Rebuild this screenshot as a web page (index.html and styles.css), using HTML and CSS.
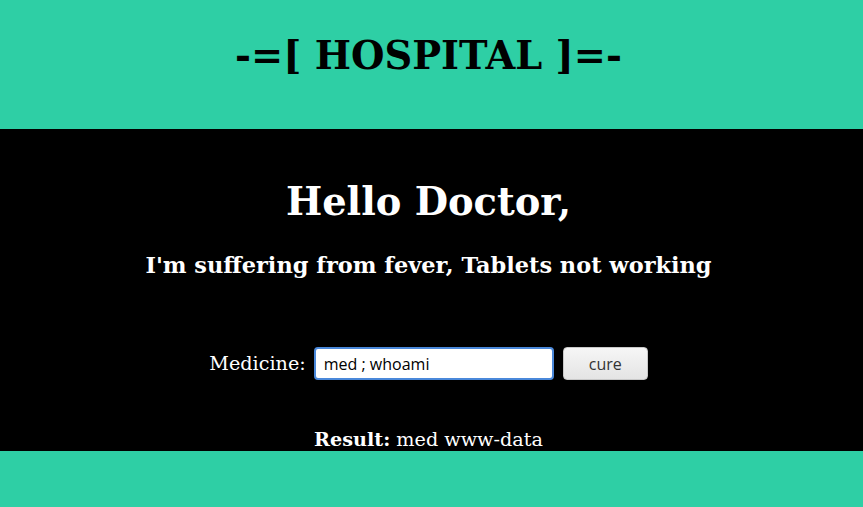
FILE: index.html
```html
<!DOCTYPE html>
<html>
<head>
<meta charset="utf-8">
<title>Hospital</title>
<link rel="stylesheet" href="styles.css">
</head>
<body>
<header class="top">
  <h1 class="brand">-=[ HOSPITAL ]=-</h1>
</header>
<main class="main">
  <h1 class="greet">Hello Doctor,</h1>
  <h3 class="complaint">I'm suffering from fever, Tablets not working</h3>
  <form class="form">
    <label class="label" for="med">Medicine:</label>
    <input class="field" id="med" type="text" value="med ; whoami">
    <button class="btn" type="button">cure</button>
  </form>
  <p class="result"><b>Result:</b> med www-data</p>
</main>
<footer class="bottom"></footer>
</body>
</html>
```
FILE: styles.css
```css
html, body {
  margin: 0;
  padding: 0;
  background: #2ecfa5;
}
body {
  font-family: "DejaVu Serif", serif;
  font-size: 19.2px;
  height: 507px;
  overflow: hidden;
}
.top {
  height: 129px;
  background: #2ecfa5;
  display: flex;
  align-items: center;
  justify-content: center;
  padding-right: 6px;
}
.brand {
  margin: 0 0 18px 0;
  font-size: 38.4px;
  font-weight: bold;
  color: #000;
}
.main {
  background: #000;
  color: #fff;
  height: 322px;
  text-align: center;
  display: flex;
  flex-direction: column;
  align-items: center;
  overflow: hidden;
  padding-right: 6px;
}
.greet {
  margin: 51px 0 0 0;
  font-size: 38.4px;
  line-height: 44px;
}
.complaint {
  margin: 28px 0 0 0;
  font-size: 22.46px;
  line-height: 27px;
}
.form {
  margin: 68px 0 0 0;
  display: flex;
  align-items: center;
  gap: 8px;
}
.label {
  font-size: 19.2px;
}
.field {
  box-sizing: border-box;
  width: 240px;
  height: 33px;
  border: 2px solid #4a88da;
  border-radius: 4px;
  padding: 0 8px;
  font-family: "Open Sans", sans-serif;
  font-size: 16px;
  color: #000;
  background: #fff;
  outline: none;
}
.btn {
  box-sizing: border-box;
  width: 85px;
  height: 33px;
  margin-left: 1px;
  border: 1px solid #c8c8c8;
  border-radius: 4px;
  background: linear-gradient(#f6f6f6, #e4e4e4);
  font-family: "Open Sans", sans-serif;
  font-size: 16px;
  color: #333;
}
.result {
  margin: 48px 0 0 0;
  font-size: 19.2px;
  line-height: 23px;
}
.bottom {
  height: 56px;
  background: #2ecfa5;
}
```
